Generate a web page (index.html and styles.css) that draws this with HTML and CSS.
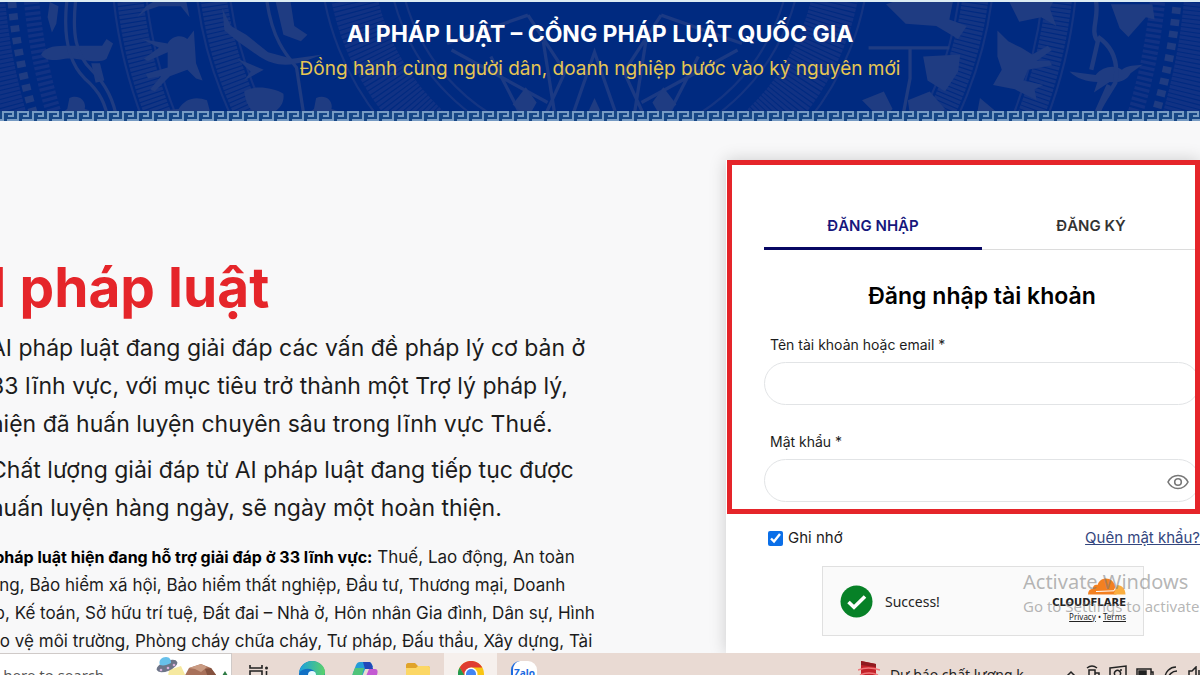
FILE: index.html
```html
<!DOCTYPE html>
<html lang="vi">
<head>
<meta charset="utf-8">
<meta name="viewport" content="width=device-width, initial-scale=1">
<title>AI Pháp luật</title>
<link rel="stylesheet" href="styles.css">
</head>
<body>
<header class="banner">
  <svg class="banner-art" viewBox="0 0 1200 109" preserveAspectRatio="xMidYMid slice" aria-hidden="true">
    <defs>
      <g id="deer">
        <path d="M-3 30 C0 24 8 26 14 30 C26 26 36 29 46 26 C49 20 50 12 56 6 L58 14 L66 12 L61 20 C60 30 56 36 52 42 L58 56 L68 62 L66 66 L54 60 L45 46 C34 48 26 46 20 46 L14 58 L18 70 L13 72 L8 58 L11 44 C4 42 0 38 -3 30Z"/>
      </g>
      <g id="bird">
        <path d="M0 22 L30 26 C38 16 52 14 60 20 C68 14 74 16 84 14 L70 24 C66 32 56 36 46 34 L28 46 L32 34 C20 34 8 30 0 22Z"/>
      </g>
      <g id="figure">
        <path d="M10 0 C18 -4 26 2 24 10 C34 12 40 20 36 30 L28 32 L34 48 L28 50 L18 36 L8 50 L2 48 L10 30 C2 26 0 14 8 10Z"/>
      </g>
    </defs>
    <g class="rings" fill="none">
      <circle cx="595" cy="-50" r="596" class="teeth"/>
      <circle cx="595" cy="-50" r="563" class="weave-wide"/>
      <circle cx="595" cy="-50" r="536" class="teeth"/>
      <circle cx="595" cy="-50" r="518" class="weave-thin"/>
      <circle cx="595" cy="-50" r="428" class="weave"/>
      <circle cx="595" cy="-50" r="443" class="line"/>
      <circle cx="595" cy="-50" r="413" class="line"/>
      <circle cx="595" cy="-50" r="352" class="weave"/>
      <circle cx="595" cy="-50" r="367" class="line"/>
      <circle cx="595" cy="-50" r="337" class="line"/>
      <circle cx="595" cy="-50" r="225" class="weave-wide"/>
      <circle cx="595" cy="-50" r="252" class="line"/>
      <circle cx="595" cy="-50" r="190" class="line"/>
      <circle cx="595" cy="-50" r="180" class="line"/>
    </g>
    <g class="figures">
      <path d="M88 48 C92 40 104 40 112 40 H144 L148 34 L154 38 L148 52 C140 58 122 50 110 52 C100 54 92 54 88 48Z"/>
      <path d="M96 0 L104 4 L102 20 L98 28 L94 14Z M134 56 H142 L146 72 L138 74Z"/>
      <use href="#figure" transform="translate(104 88)"/>
      <path d="M112 -4 C108 28 112 54 128 70 C142 82 148 94 150 112 M120 -4 C116 30 120 48 134 62 C148 76 156 92 158 112" fill="none" stroke-width="3"/>
      <path d="M180 34 L204 38 C208 30 218 30 222 34 L228 26 L230 56 L236 72 L230 70 L222 62 L206 68 L192 82 L188 80 L198 68 L186 70 L184 66 L204 60 L204 46 L186 54 L182 52 L196 42Z"/>
      <path d="M176 14 L184 4 L200 -6 H220 L224 14 L216 4 H196 L184 8Z M192 100 L214 98 C220 88 230 86 240 90 L246 112 H206Z"/>
      <path d="M254 6 L262 22 L276 30 L296 46 L318 52 L346 48 L330 54 C314 60 300 58 288 50 L268 36 L256 26Z M268 52 L280 64 L274 72 L292 62"/>
      <path d="M274 82 C282 76 300 78 310 84 C312 98 298 104 290 104 C280 102 276 94 274 82Z M302 -4 H316 L320 22 L332 30 L326 36 L310 30Z"/>
      <path d="M295 0 C300 34 312 48 322 60 L330 112" fill="none" stroke-width="3"/>
      <use href="#figure" transform="translate(330 88)"/>
      <path d="M862 2 L880 -4 H924 L920 16 L936 22 L928 34 L908 22 L880 20Z"/>
      <path d="M896 50 L930 48 L928 64 L916 82 L900 72Z M840 90 L860 82 L868 98 L858 108Z M882 90 L902 82 L916 98 L896 110 L884 104Z"/>
      <path d="M846 42 H920 M884 42 V70 L876 112" fill="none" stroke-width="3"/>
      <path d="M964 26 L974 36 L986 42 L996 48 L1010 40 L1014 44 L1000 54 L1012 54 L1014 58 L992 62 L988 72 L1006 76 L998 80 L1000 90 L980 80 L960 76 L968 62 L964 50Z"/>
      <path d="M974 -2 H1016 L1012 6 L1018 22 L1004 14 L984 18Z M948 88 L960 98 L974 110 H944Z"/>
      <use href="#bird" transform="translate(1030 46) scale(.8)"/>
      <path d="M1068 2 H1106 L1108 16 L1100 14 L1084 32 L1076 24Z"/>
      <path d="M1054 -2 C1058 14 1048 26 1056 36 L1050 62 M1056 32 C1074 44 1074 62 1072 74 C1064 88 1056 96 1054 112 M1066 76 L1050 112" fill="none" stroke-width="4"/>
    </g>
    <g class="star">
      <path d="M595 46 L618 112 H572Z M534 12 L568 64 L546 112 M656 12 L622 64 L644 112 M534 12 L460 38 M656 12 L730 38 M464 44 L552 92 M726 44 L638 92 M500 50 L532 112 M690 50 L658 112 M548 36 L560 112 M642 36 L630 112"/>
      <path class="solid" d="M532 78 L542 92 L534 106 L520 94Z M658 78 L648 92 L656 106 L670 94Z M595 88 L606 112 H584Z"/>
    </g>
  </svg>
  <div class="banner-text">
    <p class="banner-title">AI PHÁP LUẬT – CỔNG PHÁP LUẬT QUỐC GIA</p>
    <p class="banner-sub">Đồng hành cùng người dân, doanh nghiệp bước vào kỷ nguyên mới</p>
  </div>
  <svg class="fret" width="100%" height="10" aria-hidden="true">
    <defs>
      <pattern id="key" width="15" height="10" patternUnits="userSpaceOnUse">
        <path d="M0 9H3V1H13V5H8 M7 9H15" fill="none" stroke="#779bc3" stroke-width="2"/>
      </pattern>
    </defs>
    <rect width="100%" height="10" fill="url(#key)"/>
  </svg>
</header>

<main class="page">
  <section class="intro">
    <h1 class="intro-title">AI pháp luật</h1>
    <div class="lead">
      <p>AI pháp luật đang giải đáp các vấn đề pháp lý cơ bản ở<br>33 lĩnh vực, với mục tiêu trở thành một Trợ lý pháp lý,<br>hiện đã huấn luyện chuyên sâu trong lĩnh vực Thuế.</p>
      <p>Chất lượng giải đáp từ AI pháp luật đang tiếp tục được<br>huấn luyện hàng ngày, sẽ ngày một hoàn thiện.</p>
    </div>
    <p class="fields"><strong>AI pháp luật hiện đang hỗ trợ giải đáp ở 33 lĩnh vực:</strong> Thuế, Lao động, An toàn<br>lao động, Bảo hiểm xã hội, Bảo hiểm thất nghiệp, Đầu tư, Thương mại, Doanh<br>nghiệp, Kế toán, Sở hữu trí tuệ, Đất đai – Nhà ở, Hôn nhân Gia đình, Dân sự, Hình<br>sự, Bảo vệ môi trường, Phòng cháy chữa cháy, Tư pháp, Đấu thầu, Xây dựng, Tài</p>
  </section>

  <form class="card">
    <div class="credentials">
      <div class="tabs" role="tablist">
        <button type="button" class="tab tab-active" role="tab" aria-selected="true">ĐĂNG NHẬP</button>
        <button type="button" class="tab" role="tab" aria-selected="false">ĐĂNG KÝ</button>
      </div>
      <h2 class="card-title">Đăng nhập tài khoản</h2>
      <div class="field">
        <label for="user">Tên tài khoản hoặc email *</label>
        <input id="user" type="text">
      </div>
      <div class="field">
        <label for="pass">Mật khẩu *</label>
        <div class="input-wrap">
          <input id="pass" type="password">
          <button type="button" class="reveal" aria-label="Hiện mật khẩu">
            <svg width="22" height="16" viewBox="0 0 22 16" fill="none" stroke="#777" stroke-width="1.6"><path d="M1 8C3 4 7 1.500 11 1.500S19 4 21 8C19 12 15 14.500 11 14.500S3 12 1 8Z"/><circle cx="11" cy="8" r="3.300"/></svg>
          </button>
        </div>
      </div>
    </div>
    <div class="options">
      <label class="remember"><input type="checkbox" checked> Ghi nhớ</label>
      <a class="forgot" href="#">Quên mật khẩu?</a>
    </div>
    <div class="captcha">
      <svg width="33" height="33" viewBox="0 0 33 33" aria-hidden="true"><circle cx="16.500" cy="16.500" r="16" fill="#078127"/><path d="M8.500 17 L14 22.300 L25 11.500" fill="none" stroke="#fff" stroke-width="3.600"/></svg>
      <span class="captcha-state">Success!</span>
      <div class="captcha-brand">
        <svg width="38" height="17" viewBox="0 0 38 17" aria-hidden="true"><path d="M0 16.500C0 13 2 11 5 10.800C4.500 8 7 6 9.500 7C11 2.500 14.500 .5 18 .5C22.500 .5 26 3.500 27 8L28.500 16.500Z" fill="#f38020"/><path d="M29 7C34 7 37.500 11 37.500 16.500H25.500L27 12.500Z" fill="#faae40"/><path d="M8 13.500 L26 12.800 L29 7" fill="none" stroke="#fff" stroke-width="1"/></svg>
        <span class="captcha-name">CLOUDFLARE</span>
        <span class="captcha-links"><a href="#">Privacy</a> • <a href="#">Terms</a></span>
      </div>
    </div>
  </form>

  <div class="watermark">
    <p class="watermark-title">Activate Windows</p>
    <p class="watermark-text">Go to Settings to activate Windows.</p>
  </div>
</main>

<footer class="taskbar">
  <div class="taskbar-inner">
    <div class="search">
      <span class="search-text">Type here to search</span>
      <svg width="76" height="40" viewBox="0 0 76 40" aria-hidden="true">
        <path d="M14 14 L26 10 L40 40 H10Z" fill="#f6e9a0"/>
        <path d="M22 34 L34 12 L46 8 L56 12 L72 34V40H22Z" fill="#a8715a"/>
        <path d="M34 12 L46 8 L52 11 L46 16 L40 13Z" fill="#c99b83"/>
        <path d="M50 13 L56 12 L72 34V40H60Z" fill="#85523f"/>
        <path d="M70 15 L78 28 H62Z" fill="#2d7a43"/>
        <ellipse cx="12" cy="10" rx="11" ry="5" transform="rotate(-22 12 10)" fill="#6d7488"/>
        <path d="M5 9 C3 4 7 1 11 1 C15 1 16 4 16 7 C12 9 9 10 5 9Z" fill="#67c0ea"/>
        <circle cx="6" cy="14" r="1.300" fill="#d8b1dc"/><circle cx="13" cy="12" r="1.300" fill="#d8b1dc"/><circle cx="19" cy="9" r="1.300" fill="#d8b1dc"/>
      </svg>
    </div>
    <button type="button" class="app" aria-label="Task View"><svg width="20" height="18" viewBox="0 0 20 18" fill="none" stroke="#222" stroke-width="1.600"><path d="M1 0V3H13V0M1 18V15H13V18M1 6H13V12H1Z M17.500 6V18"/><circle cx="17.500" cy="3" r="1.500" fill="#222" stroke="none"/></svg></button>
    <button type="button" class="app" aria-label="Edge"><svg width="26" height="26" viewBox="0 0 26 26"><defs><linearGradient id="e1"><stop stop-color="#1a9fe0"/><stop offset="1" stop-color="#5bd268"/></linearGradient></defs><circle cx="13" cy="13" r="13" fill="#1170c4"/><path d="M0 12C1 5 6 0 13 0C21 0 26 6 26 11C26 16 22 18 18 17C15 16 17 14 16 11C14 7 4 6 0 12Z" fill="url(#e1)"/><circle cx="13" cy="14" r="4" fill="#e8fbff"/></svg></button>
    <button type="button" class="app" aria-label="Copilot"><svg width="26" height="26" viewBox="0 0 26 26"><path d="M8 1H17C19 1 20 3 21 6H14L9 18H2C0 18 0 15 1 12L4 4C5 2 6 1 8 1Z" fill="#249bd8"/><path d="M11 1H17C19 1 20 3 21 8H13Z" fill="#2348b8"/><path d="M1 12L3 7H12L9 18H3C0 18 0 15 1 12Z" fill="#4fc47a"/><path d="M17 8H23C26 8 26 11 25 14L22 22C21 24 20 25 18 25H9C7 25 6 23 5 20H12Z" fill="#c35ad2"/></svg></button>
    <button type="button" class="app" aria-label="File Explorer"><svg width="24" height="22" viewBox="0 0 24 22"><path d="M0 2C0 1 1 0 2 0H9L12 3H22C23 3 24 4 24 5V20H0Z" fill="#e0a32a"/><path d="M0 5H10L12 3H22C23 3 24 4 24 5V22H0Z" fill="#fcd765"/></svg></button>
    <button type="button" class="app app-active" aria-label="Chrome"><svg width="26" height="26" viewBox="0 0 26 26"><circle cx="13" cy="13" r="13" fill="#f9c513"/><path d="M1.700 6.500A13 13 0 0 1 24.300 6.500H13L7 16Z" fill="#df3b31"/><path d="M1.700 6.500L8 17L14 20L11 26A13 13 0 0 1 1.700 6.500Z" fill="#239a50"/><circle cx="13" cy="13" r="6.500" fill="#fff"/><circle cx="13" cy="13" r="5" fill="#4285f4"/></svg></button>
    <button type="button" class="app" aria-label="Zalo"><span class="zalo">Zalo</span></button>
    <div class="news">
      <svg width="22" height="26" viewBox="0 0 22 26" aria-hidden="true"><path d="M3 0L18 3V26H3Z" fill="#c4232a"/><path d="M0 9Q10 5 22 9M2 14Q11 10 20 14" fill="none" stroke="#f0777a" stroke-width="1.500"/><path d="M3 0L18 3V6L3 4Z" fill="#8f1b20"/></svg>
      <span>Dự báo chất lượng k...</span>
    </div>
    <div class="tray">
      <svg width="12" height="8" viewBox="0 0 12 8"><path d="M1 7L6 2L11 7"/></svg>
      <svg width="14" height="18" viewBox="0 0 14 18"><path d="M1 3Q6 -1 11 3M3 5H9V16H3ZM9 8H13V16"/></svg>
      <svg width="18" height="18" viewBox="0 0 18 18"><path d="M1 3L17 1V17H1ZM6 10A3 3 0 1 1 11 10M11 5H13"/></svg>
      <svg width="18" height="12" viewBox="0 0 18 12"><path d="M1 1H15V11H1ZM15 4H17V8H15"/><path d="M3 3H10V9H3Z" fill="#222"/></svg>
      <svg width="16" height="16" viewBox="0 0 16 16"><path d="M2 12A11 11 0 0 1 13 1M5 14A9 9 0 0 1 14 5M9 15A5 5 0 0 1 14 10"/></svg>
      <svg width="12" height="16" viewBox="0 0 12 16"><path d="M1 5H4L8 1V15L4 11H1ZM11 4V12"/></svg>
    </div>
  </div>
</footer>
</body>
</html>
```

FILE: styles.css
```css
* { box-sizing: border-box; }

body {
  margin: 0;
  height: 100vh;
  display: flex;
  flex-direction: column;
  overflow: hidden;
  background: #f8f8f9;
  color: #1c1c1c;
  font-family: Inter, "Liberation Sans", sans-serif;
}

p, h1, h2 { margin: 0; }

button { border: 0; padding: 0; background: none; font: inherit; cursor: pointer; }

/* Banner */
.banner {
  position: relative;
  flex: none;
  background: #002a80;
  border-top: 2px solid #dcecf3;
}

.banner-art {
  position: absolute;
  inset: 0;
  width: 100%;
  height: 100%;
}

.rings { stroke: #143583; }
.rings .line { stroke-width: 2; }
.rings .teeth { stroke: #1f3c82; stroke-width: 8; stroke-dasharray: 6 5; }
.rings .weave { stroke-width: 24; stroke-dasharray: 3 1; }
.rings .weave-wide { stroke-width: 42; stroke-dasharray: 3 1; stroke: #113284; }
.rings .weave-thin { stroke-width: 14; stroke-dasharray: 3 2; stroke: #113284; }
.figures { fill: #1f3c82; stroke: #1f3c82; stroke-width: 0; }
.star { fill: none; stroke: #1b3a84; stroke-width: 3; }
.star .solid { fill: #1f3c82; stroke: none; }

.banner-text {
  position: relative;
  padding: 16px 0 27px;
  text-align: center;
}

.banner-title {
  color: #fff;
  font-size: 23px;
  font-weight: 700;
  line-height: 32px;
}

.banner-sub {
  padding-top: 4px;
  color: #e6c653;
  font-size: 19px;
  line-height: 30px;
}

.fret {
  position: relative;
  display: block;
  background: #164686;
}

/* Page */
.page {
  position: relative;
  flex: 1;
  min-height: 0;
  display: flex;
  justify-content: space-between;
  overflow: hidden;
}

.intro {
  flex: 1;
  min-width: 0;
  padding-top: 132px;
  white-space: nowrap;
}

.intro-title {
  margin-left: -50px;
  color: #e5252a;
  font-size: 55px;
  font-weight: 700;
  line-height: 68px;
}

.lead {
  margin-left: -10px;
  padding-top: 8px;
  font-size: 23px;
  line-height: 38px;
}

.lead p + p { padding-top: 8px; }

.fields {
  margin-left: -50px;
  padding-top: 16px;
  font-size: 17px;
  line-height: 28px;
  text-indent: 24px;
}

.fields strong { font-size: 16px; color: #000; }

/* Login card */
.card {
  flex: none;
  width: 474px;
  margin-top: 39px;
  background: #fff;
  box-shadow: 0 0 16px rgba(0, 0, 0, .18);
}

.credentials {
  position: relative;
  padding: 44px 0 12px 38px;
}

.credentials::after {
  content: "";
  position: absolute;
  inset: 0 0 0 1px;
  border: 5px solid #e5252a;
  pointer-events: none;
}

.tabs { display: flex; }

.tab {
  flex: 1;
  height: 46px;
  padding-bottom: 2px;
  border-bottom: 1px solid #dcdcdc;
  color: #333;
  font-size: 15px;
  font-weight: 600;
}

.tab-active {
  padding-bottom: 0;
  border-bottom: 3px solid #070763;
  color: #17177c;
}

.card-title {
  padding: 30px 0 19px;
  color: #000;
  font-size: 23px;
  font-weight: 600;
  line-height: 32px;
  text-align: center;
}

.field label {
  display: block;
  padding: 0 6px 3px;
  font-size: 14px;
  line-height: 28px;
}

.field + .field { padding-top: 23px; }

.field input {
  display: block;
  width: 100%;
  height: 43px;
  padding: 0 44px 0 20px;
  border: 1px solid #e2e4e6;
  border-radius: 22px;
  background: #fff;
  font: inherit;
}

.input-wrap { position: relative; }

.reveal {
  position: absolute;
  right: 11px;
  top: 15px;
  height: 16px;
  line-height: 0;
}

.options {
  display: flex;
  align-items: center;
  justify-content: space-between;
  padding: 10px 0 0 42px;
  font-size: 15px;
  line-height: 28px;
}

.remember {
  display: flex;
  align-items: center;
  gap: 5px;
}

.remember input {
  width: 15px;
  height: 15px;
  margin: 0;
  accent-color: #0b6fe8;
}

.forgot { color: #34467e; }

.captcha {
  display: flex;
  align-items: center;
  gap: 12px;
  width: 322px;
  height: 70px;
  margin: 14px 56px 20px 96px;
  padding: 0 17px;
  border: 1px solid #e0e0e0;
  background: #fafafa;
}

.captcha-state {
  color: #232323;
  font: 14px "Noto Sans", sans-serif;
}

.captcha-brand {
  display: flex;
  flex-direction: column;
  align-items: flex-end;
  margin-left: auto;
}

.captcha-name {
  padding-top: 2px;
  color: #222;
  font: bold 10px/12px "DejaVu Sans", sans-serif;
}

.captcha-links { font: 8px/16px "Noto Sans", sans-serif; }
.captcha-links a { color: #232323; }

.watermark {
  position: absolute;
  right: 0;
  bottom: 36px;
  width: 177px;
  color: rgba(120, 120, 120, .55);
  font-family: "Noto Sans", sans-serif;
  white-space: nowrap;
  pointer-events: none;
}

.watermark-title { font-size: 20px; line-height: 26px; }
.watermark-text { font-size: 15px; line-height: 22px; }

/* Taskbar */
.taskbar {
  flex: none;
  height: 22px;
  overflow: hidden;
  background: #e9dad3;
  font-family: "Noto Sans", sans-serif;
  font-size: 15px;
}

.taskbar-inner {
  display: flex;
  height: 42px;
}

.search {
  display: flex;
  flex: none;
  justify-content: space-between;
  width: 232px;
  border: 1px solid #cfcac8;
  border-left: 0;
  background: #fff;
  color: #555;
  line-height: 42px;
  white-space: nowrap;
}

.search svg { margin-top: 2px; }

.search-text { margin-left: -34px; }

.app {
  display: flex;
  flex: none;
  align-items: center;
  justify-content: center;
  width: 53px;
  height: 42px;
}

.app-active { background: #f6f0ed; }

.zalo {
  width: 26px;
  height: 26px;
  border-left: 2px solid #1b6be0;
  border-radius: 9px;
  background: #fff;
  color: #1b6be0;
  font: bold 10px/24px "Noto Sans", sans-serif;
}

.news {
  display: flex;
  align-items: center;
  gap: 10px;
  margin-left: auto;
  padding-right: 30px;
  color: #222;
  font-size: 14px;
  white-space: nowrap;
}

.tray {
  display: flex;
  align-items: center;
  gap: 9px;
}

.tray svg {
  fill: none;
  stroke: #222;
  stroke-width: 1.5;
}
```
